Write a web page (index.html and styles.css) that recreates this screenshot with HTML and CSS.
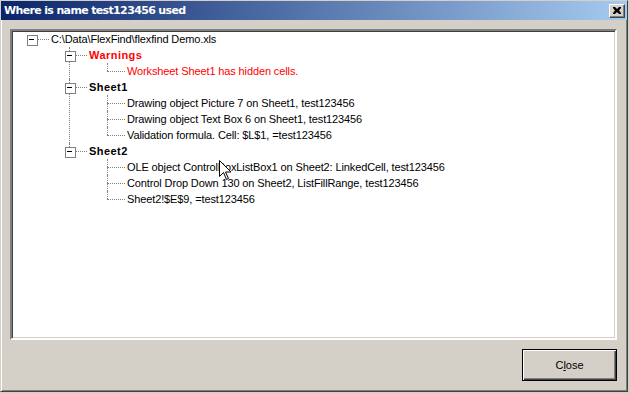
FILE: index.html
```html
<!DOCTYPE html>
<html>
<head>
    <title>Where is name test123456 used</title>
    <link rel="stylesheet" href="styles.css">
</head>
<body>
    <div class="window">
        <div class="titlebar">
            <span class="title">Where is name test123456 used</span>
            <button class="title-close">
                <svg width="8" height="7" viewBox="0 0 8 7">
                    <path d="M0 0h2l2 2 2-2h2v1l-2 2.5 2 2.5v1h-2l-2-2-2 2h-2v-1l2-2.5-2-2.5z" fill="#000"/>
                </svg>
            </button>
        </div>

        <div class="client">
            <div class="tree">
                <ul>
                    <li class="open">
                        <span class="label">C:\Data\FlexFind\flexfind Demo.xls</span>
                        <ul>
                            <li class="open">
                                <span class="label group warn">Warnings</span>
                                <ul>
                                    <li><span class="label warn">Worksheet Sheet1 has hidden cells.</span></li>
                                </ul>
                            </li>
                            <li class="open">
                                <span class="label group">Sheet1</span>
                                <ul>
                                    <li><span class="label">Drawing object Picture 7 on Sheet1, test123456</span></li>
                                    <li><span class="label">Drawing object Text Box 6 on Sheet1, test123456</span></li>
                                    <li><span class="label">Validation formula. Cell: $L$1, =test123456</span></li>
                                </ul>
                            </li>
                            <li class="open">
                                <span class="label group">Sheet2</span>
                                <ul>
                                    <li><span class="label">OLE object ControlBoxListBox1 on Sheet2: LinkedCell, test123456</span></li>
                                    <li><span class="label">Control Drop Down 130 on Sheet2, ListFillRange, test123456</span></li>
                                    <li><span class="label">Sheet2!$E$9, =test123456</span></li>
                                </ul>
                            </li>
                        </ul>
                    </li>
                </ul>
            </div>

            <div class="buttons">
                <button class="btn btn-default">C<u>l</u>ose</button>
            </div>
        </div>

        <!-- mouse pointer caught in the screenshot -->
        <svg class="pointer" width="12" height="20" viewBox="0 0 12 20">
            <path d="M0.5 0.5v16l4-4 3 7 2-1-3-6.5h5.5z" fill="#fff" stroke="#000" stroke-width="1"/>
        </svg>
    </div>
</body>
</html>
```

FILE: styles.css
```css
* {
    margin: 0;
    padding: 0;
    box-sizing: border-box;
}

body {
    font-family: Tahoma, "Liberation Sans", Arial, sans-serif;
    font-size: 11px;
    background: #d4d0c8;
    color: #000;
    overflow: hidden;
}

.window {
    position: relative;
    width: 628px;
    height: 392px;
    background: #d4d0c8;
    border: 1px solid;
    border-color: #d4d0c8 #404040 #404040 #d4d0c8;
    box-shadow: inset 1px 1px 0 #fff, inset -1px -1px 0 #808080;
}

.titlebar {
    height: 19px;
    display: flex;
    align-items: center;
    justify-content: space-between;
    padding: 0 2px 0 3px;
    background: linear-gradient(to right, #0a246a, #a6caf0);
}

.title {
    color: #fff;
    font-family: "DejaVu Sans", Tahoma, sans-serif;
    font-weight: bold;
    font-size: 11px;
    letter-spacing: -0.65px;
    white-space: nowrap;
}

.title-close {
    width: 16px;
    height: 14px;
    display: flex;
    align-items: center;
    justify-content: center;
    background: #d4d0c8;
    border: 1px solid;
    border-color: #fff #404040 #404040 #fff;
    box-shadow: inset -1px -1px 0 #808080;
}

.client {
    padding: 9px 10px 0 9px;
}

.tree {
    height: 311px;
    background: #fff;
    border: 2px solid;
    border-color: #808080 #fff #fff #808080;
    box-shadow: inset 1px 1px 0 #404040, inset -1px -1px 0 #d4d0c8;
    overflow: hidden;
}

.tree ul {
    list-style: none;
    padding-left: 38px;
}

.tree > ul {
    padding-left: 39px;
}

.tree li {
    position: relative;
}

.label {
    display: block;
    height: 16px;
    line-height: 16px;
    letter-spacing: -0.12px;
    white-space: nowrap;
}

.group {
    font-weight: bold;
    letter-spacing: 0.45px;
}

.warn {
    color: #ff0000;
}

/* connector lines */
.tree li::before {
    content: '';
    position: absolute;
    left: -20px;
    top: 8px;
    width: 18px;
    border-top: 1px dotted #808080;
}

.tree li::after {
    content: '';
    position: absolute;
    left: -20px;
    top: 0;
    bottom: 0;
    border-left: 1px dotted #808080;
}

.tree li:last-child::after {
    bottom: auto;
    height: 8px;
}

.tree > ul > li::after {
    display: none;
}

/* expand / collapse box */
.tree li.open > .label::before {
    content: '';
    position: absolute;
    z-index: 1;
    left: -24px;
    top: 4px;
    width: 9px;
    height: 9px;
    background: #fff;
    border: 1px solid #808080;
}

.tree li.open > .label::after {
    content: '';
    position: absolute;
    z-index: 2;
    left: -22px;
    top: 8px;
    width: 5px;
    height: 1px;
    background: #000;
}

.buttons {
    display: flex;
    justify-content: flex-end;
    margin-top: 9px;
}

.btn {
    width: 95px;
    height: 32px;
    font-family: inherit;
    font-size: 11px;
    color: #000;
    background: #d4d0c8;
    border: 1px solid #000;
    box-shadow: inset 1px 1px 0 #fff, inset -1px -1px 0 #404040, inset -2px -2px 0 #808080;
}

.pointer {
    position: absolute;
    left: 218px;
    top: 159px;
}
```
